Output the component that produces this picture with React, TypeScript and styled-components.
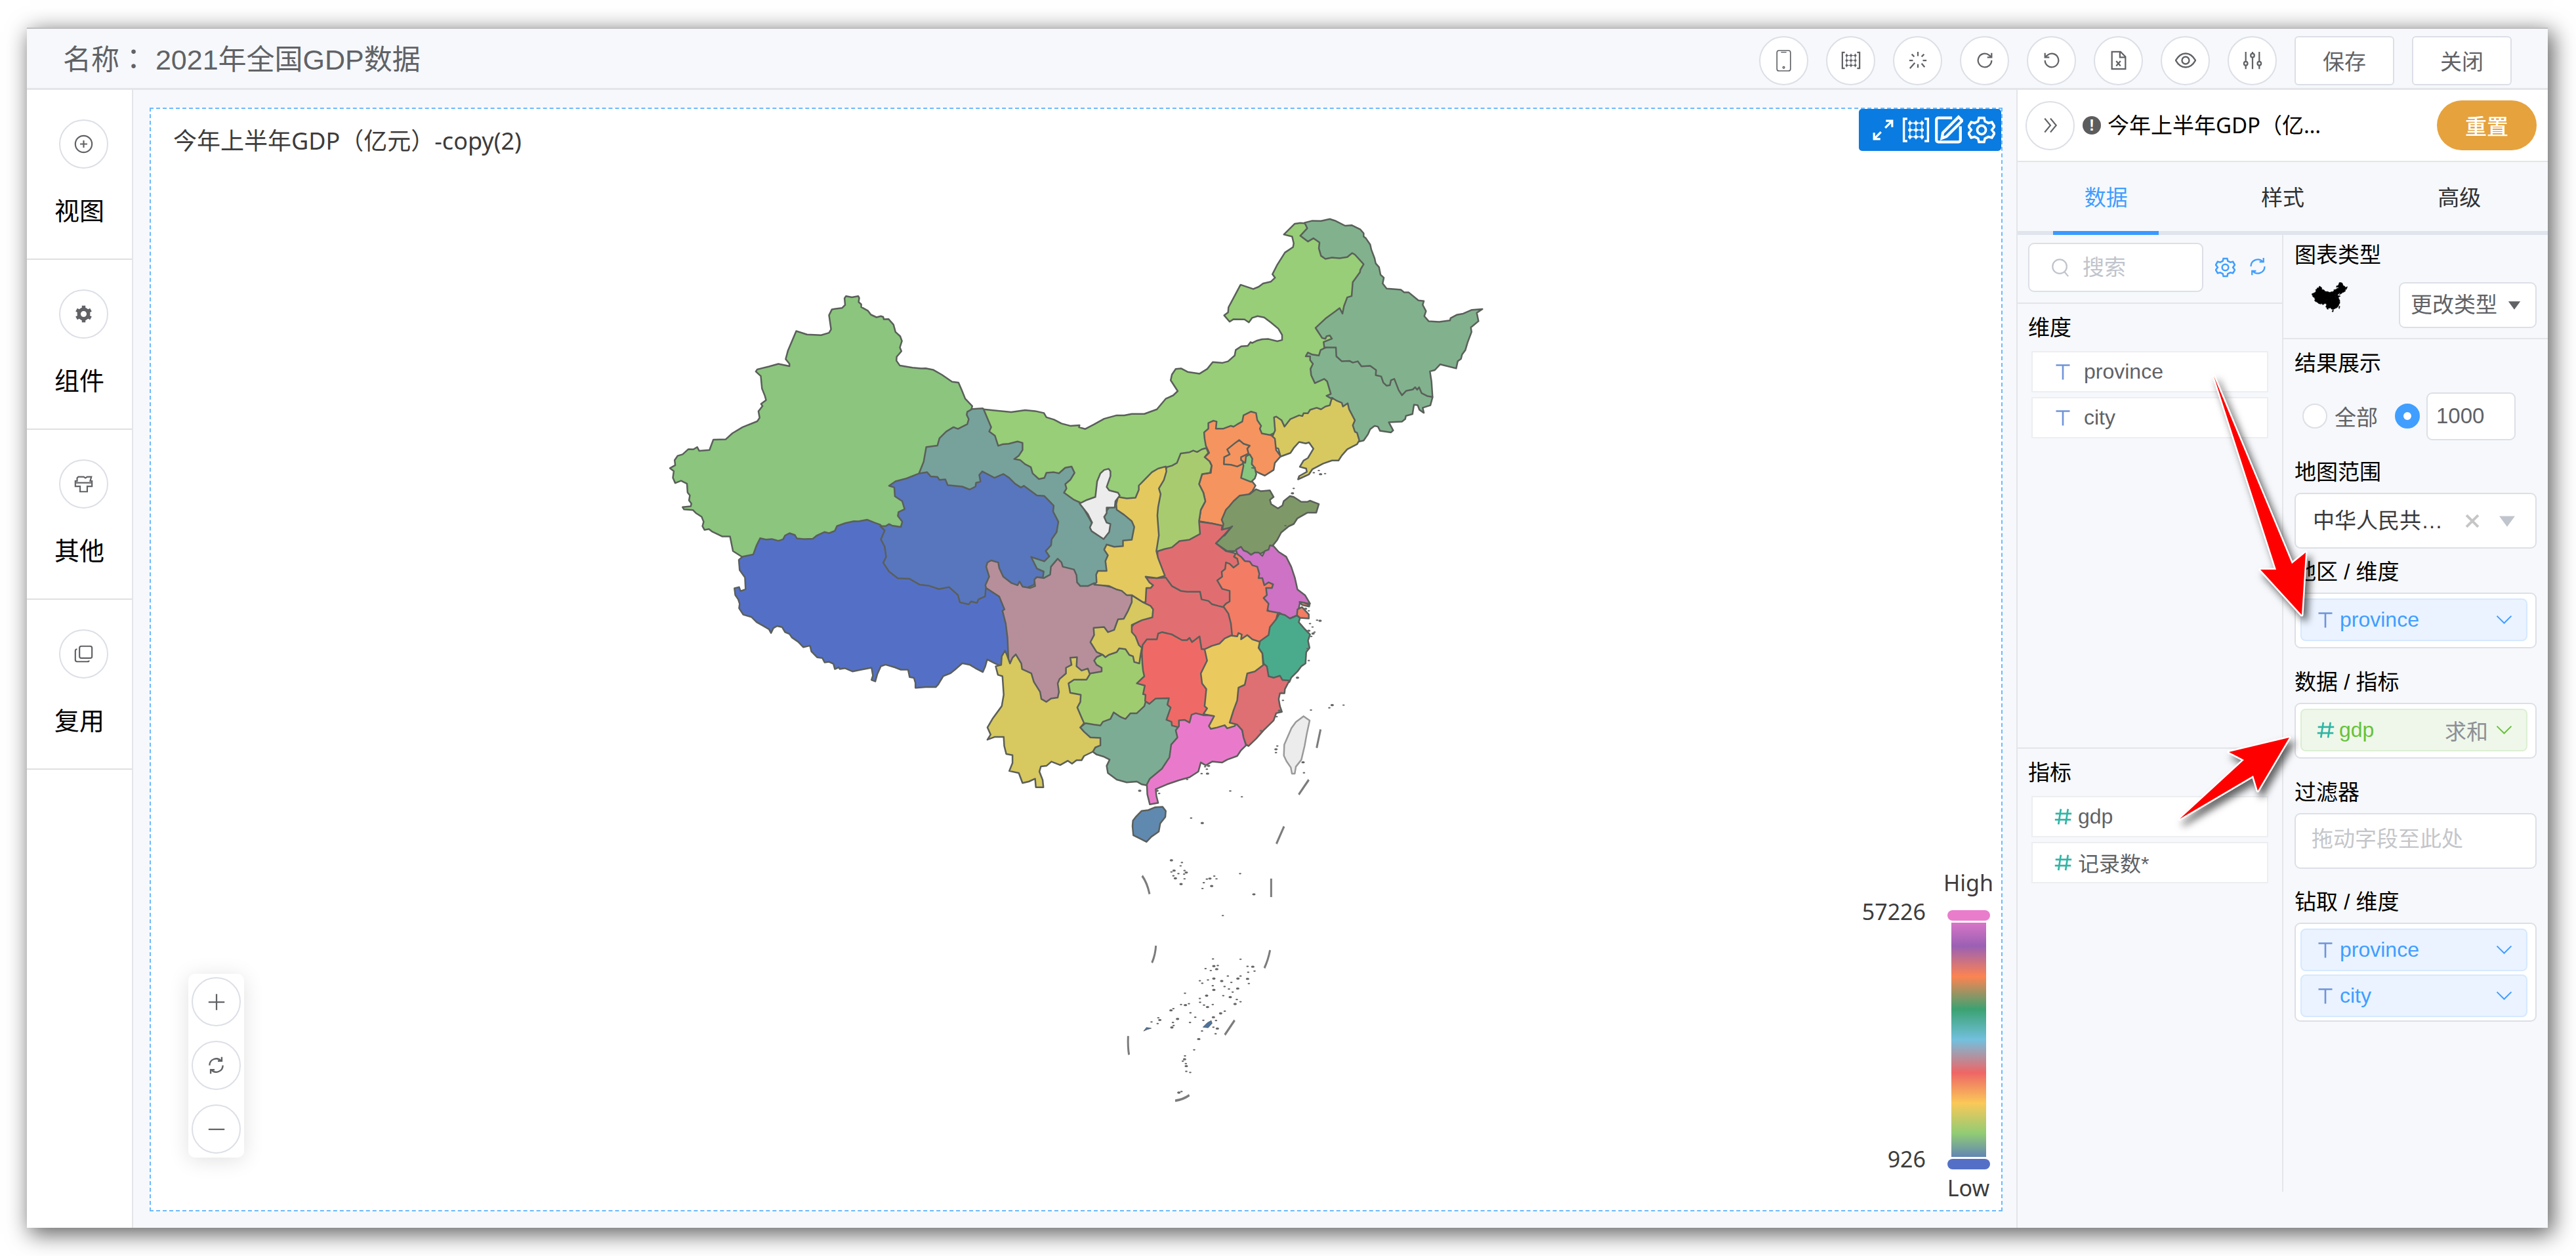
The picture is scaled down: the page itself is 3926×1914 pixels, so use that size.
import React from "react";
import styled, { createGlobalStyle, css } from "styled-components";

const sans = `"Liberation Sans", "Noto Sans CJK SC", sans-serif`;
const humanist = `"Noto Sans", "Noto Sans CJK SC", sans-serif`;

const c = {
  bg: "#f6f8fb",
  line: "#e4e5e8",
  control: "#dcdfe6",
  text: "#606266",
  muted: "#c0c4cc",
  blue: "#409eff",
  teal: "#31b5a5",
};

const GlobalStyle = createGlobalStyle`
  *, *::before, *::after { box-sizing: border-box; }
  body { margin: 0; background: #fff; font-family: ${sans}; color: #000; }
  button, input, select { font-family: inherit; margin: 0; }
  h1, h2, h3, ul { margin: 0; padding: 0; font-weight: 400; }
  ul { list-style: none; }
`;

/* ---------- map data ---------- */

type Tile = "nw" | "mid" | "ne" | "south";
const TILES: Record<Tile, [number, number, number, number]> = {
  nw: [980, 400, 700 / 1568, 700 / 1568],
  mid: [1480, 560, 600 / 1568, 680 / 1568],
  ne: [1800, 300, 1 / 3, 600 / 1568],
  south: [1640, 1040, 1 / 3, 660 / 1568],
};

type Region = { name: string; fill: string; faint?: boolean; parts: [Tile, string][] };

const REGIONS: Region[] = [
  { name: "新疆", fill: "#8bc57e", parts: [["nw", "693,115 713,119 735,115 738,121 736,135 745,143 745,152 768,165 778,178 797,187 812,183 820,186 822,194 838,193 855,212 862,237 878,252 884,268 877,290 882,303 866,322 865,335 877,352 920,359 950,362 965,361 990,366 1020,383 1055,407 1077,410 1088,435 1100,465 1124,490 1120,505 1140,560 1050,650 980,700 960,760 920,850 910,930 800,960 700,960 600,990 400,1010 345,1010 335,1003 307,985 297,935 270,935 235,918 225,910 210,913 203,900 207,885 200,868 180,855 170,845 140,843 135,835 163,832 165,823 157,812 160,795 152,785 150,755 130,745 110,753 102,735 105,712 92,702 110,692 108,675 118,660 135,655 155,637 172,638 185,630 192,643 227,640 240,605 282,604 305,583 340,562 390,542 398,530 394,508 408,490 403,483 420,470 416,455 406,430 402,388 385,372 390,365 430,355 462,346 500,354 500,346 487,330 495,300 523,234 560,246 608,248 635,240 642,228 635,180 645,160 680,155 690,145 688,122"]] },
  { name: "西藏", fill: "#5470c6", parts: [["nw", "340,1004 376,997 388,965 400,941 420,946 440,944 462,950 478,945 485,932 500,924 518,930 525,942 550,944 580,943 592,933 620,920 635,924 655,916 662,900 690,890 720,883 735,884 765,878 790,888 810,895 860,950 900,1050 1040,1080 1110,1130 1170,1090 1200,1120 1250,1180 1280,1330 1240,1380 1222,1378 1200,1368 1175,1355 1168,1380 1160,1398 1135,1385 1115,1373 1090,1368 1065,1390 1050,1402 1025,1412 1008,1440 1000,1449 965,1449 930,1452 930,1435 925,1418 910,1415 905,1390 880,1390 860,1382 828,1373 812,1378 800,1405 793,1430 780,1425 785,1410 780,1383 745,1390 715,1396 690,1385 672,1388 668,1382 655,1388 650,1370 635,1363 620,1365 612,1350 595,1348 575,1328 570,1308 547,1313 530,1295 508,1280 500,1268 485,1262 475,1245 458,1241 445,1248 437,1265 430,1252 410,1240 388,1228 370,1210 342,1202 328,1180 330,1165 325,1150 315,1135 312,1112 328,1108 333,1122 350,1115 348,1075 330,1050 327,1015"]] },
  { name: "内蒙古", fill: "#97ce77", parts: [
    ["mid", "50,147 160,157 215,150 255,153 290,160 300,175 330,183 360,197 395,205 432,203 430,210 455,216 490,200 530,180 580,168 610,168 640,163 690,163 740,147 775,110 805,98 823,83 795,45 800,25 815,5"],
    ["ne", "0,683 30,697 85,704 120,685 145,658 190,661 215,655 245,632 250,610 275,595 305,593 318,578 325,582 345,573 370,567 400,566 440,575 462,570 462,550 445,525 410,500 380,480 350,475 325,482 310,500 290,488 240,487 222,497 197,472 215,460 217,440 272,350 330,367 355,358 375,345 410,338 430,322 418,308 440,270 475,222 512,200 515,185 508,158 470,150 520,107 545,104 565,105 600,130 700,200 820,230 850,280 800,420 720,520 700,600 650,620 710,700 720,800 700,850 640,870 500,930 450,930 380,960 300,900 150,950 130,1020 60,1030"],
    ["mid", "880,330 790,370 760,380 700,440 670,500 600,480 560,470 490,470 430,490 380,480 340,430 370,380 310,400 230,390 150,330 170,290 90,300 40,220 30,160"]] },
  { name: "吉林", fill: "#82b38e", parts: [["ne", "570,635 580,620 600,628 630,632 638,610 655,603 720,580 800,630 900,680 980,700 1000,760 1100,740 1150,798 1140,830 1105,840 1110,860 1090,848 1082,830 1065,828 1058,865 1028,872 1025,885 1010,895 950,898 970,930 960,938 910,932 900,915 885,912 865,925 855,945 835,970 812,975 790,930 750,850 700,810 665,792 685,785 668,735 655,725 612,742 595,710 592,685 603,665 590,650 590,635"]] },
  { name: "黑龙江", fill: "#81b28d", parts: [["ne", "565,103 600,95 640,96 680,88 705,95 750,115 780,113 820,130 835,145 835,158 845,165 865,190 870,210 885,245 890,265 905,280 912,310 927,322 922,345 940,365 980,368 1005,370 1020,380 1040,380 1085,412 1110,415 1105,430 1120,455 1112,475 1132,495 1180,498 1230,492 1232,483 1260,470 1290,465 1330,450 1378,447 1352,462 1360,495 1325,520 1328,538 1310,580 1300,610 1285,628 1280,645 1265,655 1258,683 1185,667 1160,690 1138,695 1145,735 1150,797 1125,793 1100,782 1088,758 1080,768 1070,758 1060,767 1030,772 1010,790 995,770 975,725 960,730 955,750 940,752 925,740 915,715 890,710 892,690 865,673 825,675 808,655 785,660 770,653 735,655 710,635 708,600 655,600 652,578 690,565 680,552 665,555 660,565 645,562 615,522 660,485 725,443 738,465 745,435 760,400 780,395 785,340 818,300 820,290 835,268 795,230 782,224 760,240 725,244 690,242 660,247 640,235 630,205 633,182 605,165 580,178 545,155 577,125"]] },
  { name: "辽宁", fill: "#d7c960", parts: [["ne", "403,980 420,950 430,930 425,878 435,875 460,890 473,915 500,885 540,870 555,873 560,862 580,862 590,848 620,840 640,846 660,835 680,830 690,800 712,812 735,820 740,835 762,822 768,845 795,890 785,910 795,935 805,940 815,970 805,985 760,1005 735,1030 720,1050 690,1050 650,1062 600,1085 585,1105 535,1125 540,1112 575,1095 572,1082 543,1075 560,1050 580,1040 605,1003 585,978 570,982 540,976 515,1000 500,1020 455,1034 445,1003 415,995"]] },
  { name: "河北", fill: "#f5945e", parts: [["mid", "928,228 945,215 945,195 965,187 978,190 975,215 1005,215 1035,205 1045,208 1060,200 1080,190 1085,168 1115,155 1135,160 1140,185 1155,205 1150,215 1158,232 1195,238 1210,250 1215,290 1233,312 1210,335 1205,360 1170,380 1145,370 1135,365 1110,390 1133,415 1120,435 1060,480 1030,520 1010,560 997,555 960,548 908,540 915,500 933,470 925,440 908,410 920,375 955,370 958,345 950,330 930,315 948,300 935,275 930,250"]] },
  { name: "山东", fill: "#7f9868", parts: [["mid", "998,535 1015,500 1028,488 1045,470 1070,450 1110,445 1135,428 1155,435 1190,432 1205,455 1190,465 1195,480 1222,495 1240,485 1245,470 1270,452 1285,455 1315,472 1340,472 1350,468 1385,480 1375,510 1340,510 1300,530 1285,550 1265,558 1235,580 1220,605 1205,622 1185,640 1150,655 1115,658 1080,640 1055,645 1020,645 975,618 985,600 1010,590 1040,558 1015,572 1000,570 1005,550"]] },
  { name: "江苏", fill: "#cd72c5", parts: [["mid", "1055,640 1075,630 1085,643 1100,648 1115,658 1130,650 1145,650 1160,662 1170,645 1185,640 1190,625 1205,628 1225,648 1255,665 1275,700 1290,740 1300,780 1330,800 1350,830 1310,825 1300,870 1270,882 1228,862 1200,870 1150,820 1130,720 1080,680 1060,655"]] },
  { name: "河南", fill: "#e06e70", parts: [["mid", "745,600 880,560 908,542 960,548 1000,556 998,570 1035,562 1012,585 975,618 1015,645 1050,652 1100,700 1050,760 1060,840 1010,880 900,830 800,800 760,760 740,700"]] },
  { name: "湖北", fill: "#e16e71", parts: [["mid", "700,738 740,740 775,738 800,768 835,785 860,788 912,788 918,815 945,820 960,832 985,838 1005,842 1040,850 1060,940 1030,980 940,1010 900,980 700,1010 665,1000 620,930 680,870 680,750"]] },
  { name: "山西", fill: "#a9cb6f", parts: [["mid", "780,350 800,345 820,335 835,302 870,298 885,292 900,297 920,287 937,283 945,300 930,315 950,330 958,345 952,370 920,375 908,410 925,440 933,470 915,500 908,540 912,585 870,605 830,610 800,632 770,638 735,648 720,600 720,500 730,430"]] },
  { name: "甘肃", fill: "#76a29b", parts: [
    ["nw", "1107,510 1124,500 1160,498"],
    ["mid", "50,147 80,210 72,225 95,240 108,275 125,270 150,268 185,260 205,265 205,290 190,310 172,322 195,325 215,340 238,350 245,372 270,392 292,388 300,370 330,368 350,372 375,352 400,348 412,370 395,395 375,410 380,425 370,440 410,465 435,475 490,560 560,480 600,480 670,540 670,620 570,640 560,700 520,740 500,790 430,800 380,730 345,700 300,760"],
    ["nw", "1350,1080 1320,1060 1280,980 1350,900 1300,800 1200,760 1110,800 1000,760 960,740 943,718 958,680 967,630 1005,625 1012,600 1035,577 1060,562 1075,568 1107,552 1112,535 1105,520"]] },
  { name: "青海", fill: "#5876be", parts: [["nw", "810,900 828,900 840,893 850,898 880,903 885,885 870,865 872,852 893,842 885,815 860,798 858,768 840,762 862,747 900,737 943,720 970,716 982,730 1005,732 1012,742 1032,740 1040,760 1090,765 1115,775 1135,765 1137,752 1152,748 1148,725 1158,713 1200,735 1230,722 1250,735 1270,755 1290,768 1300,762 1345,795 1370,797 1402,830 1400,850 1418,885 1412,920 1395,945 1393,965 1375,985 1387,1003 1370,1020 1325,1005 1345,1045 1368,1055 1365,1075 1342,1075 1335,1100 1312,1110 1290,1130 1220,1090 1190,1050 1170,1115 1168,1140 1145,1150 1140,1162 1120,1157 1112,1167 1082,1160 1075,1135 1045,1108 1010,1115 975,1103 945,1100 910,1080 870,1078 840,1055 820,1025 830,1005 825,970 812,945 825,915"]] },
  { name: "四川", fill: "#b68f9b", parts: [["mid", "60,700 65,685 80,678 108,685 112,705 128,735 160,757 185,765 193,752 205,770 235,775 255,768 252,745 262,737 290,740 315,728 318,700 345,672 360,685 365,700 410,710 420,730 422,755 435,768 465,768 490,758 600,780 650,790 660,850 600,920 530,960 510,990 550,1050 500,1100 400,1100 370,1180 300,1200 250,1150 180,1080 150,1050 148,1010 145,950 138,900 125,855 133,850 112,805 60,775 57,765 72,735"]] },
  { name: "云南", fill: "#d7c85f", parts: [["mid", "135,995 142,1008 155,1040 165,1020 178,1008 200,1040 203,1060 240,1075 250,1105 275,1140 280,1165 300,1175 318,1163 345,1160 350,1140 345,1110 352,1095 378,1075 378,1055 400,1045 395,1020 422,1018 420,1050 440,1065 465,1058 472,1075 500,1110 450,1130 470,1200 470,1260 530,1280 540,1320 500,1360 485,1350 450,1365 440,1380 420,1380 402,1392 385,1382 355,1397 320,1385 300,1400 278,1402 272,1420 285,1450 288,1475 258,1475 255,1445 230,1455 205,1460 190,1425 152,1418 165,1390 165,1362 140,1358 132,1330 130,1298 95,1298 65,1308 78,1290 65,1265 85,1235 122,1190 130,1150 125,1085 107,1080 98,1050 120,1045 122,1015"]] },
  { name: "贵州", fill: "#a0cc70", parts: [["mid", "490,1030 500,1018 520,1010 600,960 660,1000 720,1050 720,1180 700,1210 640,1250 560,1270 470,1280 435,1265 450,1250 440,1230 423,1195 435,1175 437,1150 395,1143 388,1110 410,1097 460,1097 475,1075 520,1068 520,1055 500,1045"]] },
  { name: "重庆", fill: "#d7c85f", parts: [["mid", "640,800 685,825 715,838 725,850 722,878 680,888 640,905 640,930 655,945 668,975 680,985 675,1010 670,1040 650,1035 645,1015 630,1010 615,990 590,987 580,1000 548,1010 535,1018 525,1010 500,1000 475,965 490,940 488,915 530,912 545,930 570,922 585,885 608,883 625,855 640,825"]] },
  { name: "陕西", fill: "#e4c95f", parts: [["mid", "775,348 778,365 768,395 748,425 755,445 745,490 742,520 748,590 738,645 745,670 758,700 772,732 740,740 695,735 710,755 725,765 715,775 698,775 695,825 685,825 640,800 620,800 600,785 580,780 550,768 490,763 500,755 498,728 505,715 540,715 535,680 545,660 530,640 540,622 570,630 605,628 605,608 640,605 650,560 640,540 610,518 580,500 578,480 585,455 620,460 655,458 668,430 668,415 690,395 720,368 745,355"]] },
  { name: "宁夏", fill: "#ececec", parts: [["mid", "530,360 548,356 555,365 555,382 540,420 550,432 585,440 592,450 575,470 572,492 540,492 540,512 530,525 540,545 555,550 550,578 528,603 480,575 473,562 482,545 465,515 432,478 462,465 495,455 502,400 515,372"]] },
  { name: "广西", fill: "#7dac94", parts: [["mid", "435,1265 455,1250 490,1255 515,1258 525,1245 555,1235 568,1212 590,1225 600,1230 615,1235 635,1215 660,1215 690,1190 700,1160 800,1150 830,1230 850,1260 830,1320 800,1400 740,1450 710,1470 680,1465 660,1455 620,1458 580,1448 545,1425 540,1400 552,1378 530,1368 500,1360 485,1350 495,1335 515,1328 515,1302 475,1300 450,1280"]] },
  { name: "湖南", fill: "#ef6a66", parts: [["mid", "683,975 700,955 740,955 745,935 760,930 800,938 840,958 860,958 870,950 880,965 910,945 918,990 930,990 960,1000 960,1200 925,1260 850,1270 800,1258 798,1245 778,1238 795,1195 782,1185 788,1162 735,1163 710,1182 693,1172 695,1150 685,1148 692,1118 660,1110 690,1085 685,1065 682,1040 680,1000"]] },
  { name: "广东", fill: "#e97acb", parts: [["mid", "828,1240 850,1238 870,1248 878,1220 895,1215 925,1222 965,1222 990,1245 1050,1245 1078,1270 1095,1328 1075,1345 1060,1365 1020,1378 1000,1388 960,1385 935,1398 915,1388 905,1420 870,1440 830,1450 780,1465 735,1482 738,1505 745,1530 712,1535 702,1500 700,1465 712,1445 760,1410 790,1370 797,1325 822,1300 815,1275 828,1260"]] },
  { name: "安徽", fill: "#f27c64", parts: [["mid", "1055,652 1075,665 1090,680 1110,682 1120,695 1140,700 1148,725 1145,740 1160,740 1168,765 1185,755 1203,762 1198,775 1175,775 1178,800 1165,810 1185,830 1180,855 1222,862 1215,885 1200,910 1190,950 1150,970 1110,965 1060,960 1040,945 1035,900 1025,865 1005,840 1015,830 1030,822 1030,785 1000,778 980,748 1000,735 998,718 1012,708 1015,685 1030,690 1045,703 1065,690 1060,672 1047,665"]] },
  { name: "浙江", fill: "#4aab8c", parts: [["mid", "1150,962 1185,940 1190,912 1215,885 1228,865 1250,870 1270,882 1298,872 1310,880 1305,895 1330,920 1350,938 1342,960 1348,985 1335,1000 1332,1040 1315,1050 1300,1068 1275,1090 1268,1105 1240,1110 1200,1110 1180,1080 1165,1040 1160,1005 1145,985"]] },
  { name: "江西", fill: "#eac95e", parts: [["mid", "930,990 960,978 990,970 1010,952 1035,942 1060,945 1065,933 1078,938 1075,955 1100,940 1120,955 1150,964 1145,985 1160,1005 1163,1042 1180,1060 1110,1120 1090,1200 1050,1260 1020,1268 1010,1257 980,1265 955,1270 947,1260 968,1225 925,1218 940,1198 930,1190 937,1130 920,1110 915,1075 940,1030"]] },
  { name: "福建", fill: "#de6f73", parts: [["mid", "1168,1043 1178,1050 1185,1085 1205,1090 1230,1083 1240,1098 1268,1100 1250,1130 1248,1145 1230,1145 1225,1165 1230,1190 1238,1210 1215,1215 1205,1240 1165,1275 1135,1305 1105,1330 1095,1325 1085,1300 1080,1275 1060,1255 1030,1248 1045,1205 1060,1170 1065,1125 1090,1115 1100,1075 1130,1068"]] },
  { name: "上海", fill: "#f27c64", parts: [["mid", "1300,850 1318,842 1345,868 1345,882 1310,880 1298,870"]] },
  { name: "崇明", fill: "#f27c64", parts: [["mid", "1308,824 1325,826 1348,835 1346,840 1318,834"]] },
  { name: "北京", fill: "#f5945e", parts: [["mid", "1007,340 1008,315 1030,305 1020,288 1052,265 1068,255 1085,268 1110,275 1100,285 1105,302 1075,315 1075,325 1090,335 1060,348 1035,342"]] },
  { name: "天津", fill: "#86c67f", parts: [["mid", "1095,312 1110,305 1120,320 1118,340 1130,352 1136,375 1130,390 1115,402 1075,388 1085,345 1082,335 1092,335"]] },
  { name: "海南", fill: "#6089b0", parts: [["south", "260,500 275,485 300,465 330,462 360,452 395,450 410,465 408,487 385,510 378,540 345,558 322,577 300,568 262,553 258,520"]] },
  { name: "台湾", fill: "#ececec", faint: true, parts: [["south", "1040,122 1068,138 1055,185 1045,230 1030,280 1005,305 1000,330 987,330 982,308 962,285 950,265 952,225 985,165 1005,143"]] },
];

const toPoints = (parts: [Tile, string][]) =>
  parts
    .map(([tile, pts]) => {
      const [ox, oy, sx, sy] = TILES[tile];
      return pts
        .split(" ")
        .map((p) => {
          const [x, y] = p.split(",").map(Number);
          return `${(ox + x * sx).toFixed(1)},${(oy + y * sy).toFixed(1)}`;
        })
        .join(" ");
    })
    .join(" ");

const SEA_LINES = [
  "M1118,170L1100,237", "M1064,352L1018,406", "M951,521L916,584", "M892,710V777",
  "M302,700Q325,725 336,766", "M365,953Q363,985 347,1015", "M887,969Q878,1005 861,1034",
  "M725,1223L680,1276", "M238,1280Q236,1320 242,1348", "M518,1494Q490,1510 453,1514",
];

const ISLANDS =
  "436,644 484,652 478,664 448,681 436,686 445,700 454,709 468,692 496,681 504,688 494,694 496,711 480,730 " +
  "584,725 598,712 612,710 632,701 642,711 620,737 578,746 750,692 813,767 671,844 526,491 577,509 705,393 758,414 " +
  "291,392 626,1001 752,1002 630,1027 648,1025 616,1043 643,1038 592,1036 784,1028 808,1029 787,1049 816,1045 740,1072 " +
  "752,1063 694,1063 784,1073 790,1090 603,1077 630,1072 566,1080 577,1089 666,1081 710,1086 625,1098 630,1113 679,1101 " +
  "699,1110 739,1108 716,1121 498,1125 597,1134 566,1144 673,1134 705,1139 735,1148 752,1156 727,1164 567,1158 585,1168 " +
  "601,1175 625,1166 480,1166 500,1168 516,1163 445,1181 434,1187 523,1196 545,1212 661,1198 680,1190 376,1214 383,1222 " +
  "345,1229 373,1235 464,1218 443,1231 446,1242 438,1249 521,1231 582,1223 628,1212 640,1224 628,1248 646,1253 638,1272 " +
  "576,1262 561,1291 540,1330 498,1352 496,1364 488,1371 502,1380 504,1389 504,1408 522,1412 470,1485 482,1481 " +
  "1158,92 1171,82 1223,82 1074,100 1038,289 1042,327 920,230 914,242 914,254 590,305 606,302 598,314 574,330 601,330 " +
  "508,351 380,402 370,392 940,37 946,65 930,102 917,124 845,175";

const EAST_ISLETS =
  "1332,848 1345,855 1378,888 1390,890 1350,900 1360,912 1345,925 1368,930 1355,945 1362,935 1340,988 1345,1030 1300,1090 " +
  "1365,370 1385,362 1392,375 1410,373 1285,425 1280,442 1252,556 1120,353 1128,353";

const Dots = ({ tile, pts }: { tile: Tile; pts: string }) => {
  const [ox, oy, sx, sy] = TILES[tile];
  return (
    <g fill="#666">
      {pts.split(" ").map((p, i) => {
        const [x, y] = p.split(",").map(Number);
        return <ellipse key={p} cx={ox + x * sx} cy={oy + y * sy} rx={i % 3 === 0 ? 2.6 : 1.9} ry={i % 3 === 0 ? 1.7 : 1.1} />;
      })}
    </g>
  );
};

const ChinaMap = () => {
  const [ox, oy, sx, sy] = TILES.south;
  return (
    <MapSvg viewBox="230 166 2820 1678" role="img" aria-label="今年上半年GDP（亿元）">
      <g strokeLinejoin="round" strokeWidth="2.5">
        {REGIONS.map((r) => (
          <polygon key={r.name} points={toPoints(r.parts)} fill={r.fill} stroke={r.faint ? "#9a9a9a" : "#5a5f5a"} />
        ))}
      </g>
      <g transform={`translate(${ox} ${oy}) scale(${sx} ${sy})`}>
        <g fill="none" stroke="#7c7c7c" strokeWidth="9">
          {SEA_LINES.map((d) => <path key={d} d={d} />)}
        </g>
        <path d="M580,1248L600,1232L618,1224L622,1234L604,1250Z M309,1262L322,1249L344,1252L326,1256Z" fill="#4f739c" stroke="#555" strokeWidth="2" />
      </g>
      <Dots tile="south" pts={ISLANDS} />
      <Dots tile="mid" pts={EAST_ISLETS} />
    </MapSvg>
  );
};

const MiniMap = () => (
  <svg width="55" height="46" viewBox="1015 325 1250 970" preserveAspectRatio="none" aria-hidden="true">
    {REGIONS.map((r) => (
      <polygon key={r.name} points={toPoints(r.parts)} fill="#000" stroke="#000" strokeWidth="12" />
    ))}
  </svg>
);

/* ---------- icons ---------- */

const PATHS: Record<string, React.ReactNode> = {
  phone: <><rect x="6" y="1" width="20" height="30" rx="3" strokeWidth="1.6" /><path d="M12 3.5h8" strokeWidth="1.4" /><circle cx="16" cy="26" r="1.3" strokeWidth="1.4" /></>,
  grid: <><path d="M6 3H2v26h4M26 3h4v26h-4" /><path d="M9 8h14M9 16h14M9 24h14M9 5v22M16 5v22M23 5v22" strokeWidth="1" /><path d="M9 8h.1M16 8h.1M23 8h.1M9 16h.1M16 16h.1M23 16h.1M9 24h.1M16 24h.1M23 24h.1" strokeWidth="4" strokeLinecap="round" /></>,
  burst: <path d="M16 2v7M16 22v6M2 16h6M24 16h6M6 6l4 4M26 6l-4 4M11 20l-8 9M22 21l5 6" />,
  redo: <><path d="M27 16a11 11 0 1 1-4-8.500l3 2.500" /><path d="M27 4v7h-7" /></>,
  undo: <><path d="M5 16a11 11 0 1 0 4-8.500l-3 2.500" /><path d="M5 4v7h7" /></>,
  file: <><path d="M5 2h14l8 8v20H5z" /><path d="M18 2v9h9M12 17l7 8M19 17l-7 8" /></>,
  eye: <><path d="M1 16C5 9 10 5.500 16 5.500S27 9 31 16c-4 7-9 10.500-15 10.500S5 23 1 16z" /><circle cx="16" cy="16" r="5.500" /></>,
  sliders: <><path d="M5 2v16M5 24v6M16 2v3M16 11v19M27 2v16M27 24v6" /><circle cx="5" cy="21" r="3" /><circle cx="16" cy="8" r="3" /><circle cx="27" cy="21" r="3" /></>,
  plusCircle: <><circle cx="16" cy="16" r="14" /><path d="M16 10v12M10 16h12" /></>,
  gearBold: <><circle cx="16" cy="16" r="8" strokeWidth="6" /><path d="M16 2v5M16 25v5M3.900 9l4.300 2.500M23.800 20.500l4.300 2.500M3.900 23l4.300-2.500M23.800 11.500L28.100 9" strokeWidth="6" /></>,
  brush: <><path d="M7 4h9l3 2 3-2h7l-2 7h3v9h-8v9H10v-9H2v-9h3V6z" /><path d="M3 14h26" /></>,
  copy: <><rect x="9" y="3" width="21" height="20" rx="3" /><path d="M5 8c-2 0-3 1-3 3v15c0 2 1 3 3 3h17c2 0 3-1 3-2" /></>,
  plus: <path d="M16 3v26M3 16h26" />,
  minus: <path d="M3 16h26" />,
  sync: <><path d="M28 16a12 12 0 0 1-21 8M4 16A12 12 0 0 1 25 8" /><path d="M6 31v-7h7M26 1v7h-7" /></>,
  forward: <path d="M6 4l10 12L6 28M16 4l10 12-10 12" />,
  search: <><circle cx="15" cy="14" r="11.500" /><path d="M23 23l6 7" /></>,
  cog: <><path d="M13 2h6l1 4 4 2 4-1 3 5-3 4 3 4-3 5-4-1-4 2-1 4h-6l-1-4-4-2-4 1-3-5 3-4-3-4 3-5 4 1 4-2z" /><circle cx="16" cy="16" r="5" /></>,
  expand: <><path d="M19 13L29 3M20 3h9v9M13 19L3 29M12 29H3v-9" /></>,
  edit: <><path d="M20 3H5a2 2 0 0 0-2 2v22a2 2 0 0 0 2 2h22a2 2 0 0 0 2-2V12" /><path d="M27 2l4 4-17 17-5 2 1-6z" /></>,
  typeT: <path d="M4 4h24M16 4v25" />,
  hash: <path d="M12 3L8 29M24 3l-4 26M3 11h27M2 21h27" />,
  down: <path d="M3 9l13 13L29 9" />,
  cross: <path d="M5 5l22 22M27 5L5 27" />,
};

const Icon = ({ name, size = 30, weight = 2.4 }: { name: string; size?: number; weight?: number }) => (
  <svg width={size} height={size} viewBox="0 0 32 32" fill="none" stroke="currentColor" strokeWidth={weight} aria-hidden="true">
    {PATHS[name]}
  </svg>
);

const Caret = ({ size }: { size: number }) => (
  <svg width={size} height={size} viewBox="0 0 24 24" fill="currentColor" aria-hidden="true"><path d="M1 5h22L12 20z" /></svg>
);

/* ---------- shell ---------- */

const Page = styled.div`
  min-height: 100vh;
  padding: 42px 43px 43px 41px;
  display: flex;
`;

const Window = styled.div`
  flex: 1;
  display: flex;
  flex-direction: column;
  background: ${c.bg};
  border-top: 2px solid #bfbfc0;
  box-shadow: 6px 8px 32px 2px rgba(0, 0, 0, 0.62);
`;

const Header = styled.header`
  height: 93px;
  padding: 0 55px;
  display: flex;
  justify-content: space-between;
  align-items: center;
  border-bottom: 3px solid ${c.line};
`;

const PageTitle = styled.h1`
  font-size: 43px;
  line-height: 60px;
  color: ${c.text};
`;

const Colon = styled.span`
  font-family: "Noto Sans CJK TC", sans-serif;
`;

const Actions = styled.div`
  display: flex;
  gap: 27px;
  padding-top: 6px;
`;

const Round = styled.button`
  width: 75px;
  height: 75px;
  padding: 0;
  display: flex;
  align-items: center;
  justify-content: center;
  flex: none;
  border: 2px solid ${c.control};
  border-radius: 50%;
  background: #fff;
  color: ${c.text};
`;

const PlainButton = styled.button`
  width: 152px;
  height: 75px;
  border: 2px solid ${c.control};
  border-radius: 6px;
  background: #fff;
  color: ${c.text};
  font-size: 33px;
`;

const Main = styled.div`
  flex: 1;
  display: flex;
`;

const Sidebar = styled.nav`
  width: 162px;
  background: #fff;
  border-right: 2px solid ${c.line};
`;

const SideItem = styled.div`
  height: 259px;
  padding-top: 45px;
  display: flex;
  flex-direction: column;
  align-items: center;
  gap: 38px;
  border-bottom: 2px solid #dfe0e2;
`;

const SideRound = styled(Round)`
  margin-left: 13px;
`;

const SideLabel = styled.span`
  font-size: 38px;
  line-height: 54px;
`;

/* ---------- canvas ---------- */

const Stage = styled.main`
  flex: 1;
  min-width: 0;
  display: flex;
  padding: 27px 21px 25px 25px;
`;

const Canvas = styled.section`
  flex: 1;
  min-width: 0;
  display: grid;
  border: 2px dashed #6cbaff;
  background: #fff;
  font-family: ${humanist};
  color: #3c3c3c;
  & > * { grid-area: 1 / 1; }
`;

const MapSvg = styled.svg`
  width: 100%;
  height: 100%;
  min-height: 0;
`;

const ChartTitle = styled.h2`
  place-self: start;
  padding: 24px 34px;
  font-size: 36px;
  line-height: 50px;
`;

const ChartTools = styled.div`
  place-self: start end;
  height: 64px;
  padding: 0 8px 0 14px;
  display: flex;
  align-items: center;
  gap: 5px;
  border-radius: 5px;
  background: #0a7be0;
`;

const Tool = styled.button`
  width: 45px;
  height: 45px;
  padding: 0;
  display: flex;
  align-items: center;
  justify-content: center;
  border: 0;
  background: none;
  color: #fff;
`;

const ZoomCard = styled.div`
  place-self: end start;
  margin: 0 0 80px 57px;
  padding: 5px 5px 6px;
  display: flex;
  flex-direction: column;
  gap: 22px;
  border-radius: 10px;
  background: #fff;
  box-shadow: 0 4px 32px rgba(0, 0, 0, 0.12);
`;

const Legend = styled.div`
  place-self: end;
  margin: 0 14px 14px 0;
  display: grid;
  grid-template-columns: auto 72px;
  column-gap: 29px;
  justify-items: center;
  font-size: 34px;
  line-height: 48px;
`;

const LegendWord = styled.span`
  grid-column: 2;
  line-height: 40px;
`;

const LegendValues = styled.div`
  justify-self: end;
  height: 425px;
  display: flex;
  flex-direction: column;
  justify-content: space-between;
  text-align: right;
`;

const LegendScale = styled.div`
  padding: 22px 0 8px;
  display: flex;
  flex-direction: column;
  align-items: center;
  gap: 3px;
`;

const Handle = styled.span<{ $color: string }>`
  width: 65px;
  height: 16px;
  border-radius: 8px;
  background: ${(p) => p.$color};
`;

const Ramp = styled.span`
  flex: 1;
  width: 53px;
  background: linear-gradient(#ea7ccc -3%, #9a60b4 10%, #fc8452 23%, #3ba272 37%, #73c0de 50%, #ee6666 64%, #fac858 77%, #91cc75 90%, #5470c6 103%);
`;

/* ---------- right panel ---------- */

const Panel = styled.aside`
  position: relative;
  width: 810px;
  flex: none;
  display: flex;
  flex-direction: column;
  border-left: 2px solid ${c.line};
  font-size: 33px;
`;

const PanelHead = styled.div`
  height: 110px;
  padding: 0 17px 0 12px;
  display: flex;
  align-items: center;
  background: #fff;
  border-bottom: 2px solid ${c.line};
`;

const InfoDot = styled.span`
  width: 28px;
  height: 28px;
  margin: 0 10px 0 12px;
  border-radius: 50%;
  background: #5c5c5c;
  color: #fff;
  font-size: 24px;
  line-height: 28px;
  font-weight: 700;
  text-align: center;
`;

const PanelTitle = styled.h2`
  font-family: ${humanist};
  font-size: 33px;
  line-height: 48px;
  white-space: nowrap;
`;

const ResetButton = styled.button`
  width: 152px;
  height: 76px;
  margin-left: auto;
  border: 0;
  border-radius: 38px;
  background: #e6a23c;
  color: #fff;
  font-size: 33px;
  font-weight: 500;
`;

const Tabs = styled.div`
  height: 111px;
  display: flex;
  border-bottom: 6px solid #dfe4ed;
`;

const Tab = styled.button<{ $active?: boolean }>`
  flex: 1;
  padding: 0 54px;
  margin-bottom: -6px;
  display: flex;
  flex-direction: column;
  border: 0;
  background: none;
  font-size: 33px;
  line-height: 101px;
  color: ${(p) => (p.$active ? c.blue : "#303133")};
  & > span {
    width: 100%;
    padding-top: 4px;
    border-bottom: 6px solid ${(p) => (p.$active ? "#3a99ff" : "transparent")};
  }
`;

const Columns = styled.div`
  flex: 1;
  display: flex;
  padding-bottom: 55px;
`;

const Fields = styled.div`
  width: 405px;
  flex: none;
  display: flex;
  flex-direction: column;
  border-right: 2px solid ${c.line};
`;

const SearchRow = styled.div`
  padding: 12px 22px 16px 16px;
  display: flex;
  align-items: center;
  gap: 18px;
  border-bottom: 2px solid ${c.line};
`;

const SearchBox = styled.label`
  flex: 1;
  min-width: 0;
  height: 75px;
  padding: 0 14px 0 32px;
  display: flex;
  align-items: center;
  gap: 19px;
  border: 2px solid ${c.control};
  border-radius: 9px;
  background: #fff;
  color: ${c.muted};
  & > svg { flex: none; }
  & > input {
    width: 100%;
    min-width: 0;
    padding: 0;
    border: 0;
    outline: 0;
    background: none;
    font-size: 33px;
    color: ${c.text};
  }
  & > input::placeholder { color: ${c.muted}; }
`;

const LinkIcon = styled.button`
  width: 31px;
  height: 31px;
  padding: 0;
  border: 0;
  background: none;
  color: ${c.blue};
`;

const FieldGroup = styled.section`
  flex: 1;
  padding: 12px 21px 0 16px;
  & + & { border-top: 2px solid ${c.line}; }
`;

const Heading = styled.h3`
  font-size: 33px;
  line-height: 50px;
`;

const FieldList = styled.ul`
  padding: 10px 0 0 5px;
  display: flex;
  flex-direction: column;
  gap: 7px;
`;

const FieldRow = styled.li<{ $metric?: boolean }>`
  height: 63px;
  padding-left: 32px;
  display: flex;
  align-items: center;
  gap: ${(p) => (p.$metric ? 8 : 18)}px;
  border: 2px solid #eceef1;
  background: #fff;
  color: ${c.text};
  font-size: 32px;
  & > svg { color: ${(p) => (p.$metric ? c.teal : "#6f94d8")}; }
`;

const Settings = styled.div`
  flex: 1;
  min-width: 0;
`;

const Block = styled.section<{ $top: number }>`
  padding: ${(p) => p.$top}px 17px 0;
`;

const ChartTypeBlock = styled(Block)`
  padding-bottom: 15px;
  border-bottom: 2px solid ${c.line};
`;

const ChartTypeRow = styled.div`
  padding: 16px 0 0 26px;
  display: flex;
  justify-content: space-between;
  align-items: flex-start;
`;

const boxed = css`
  border: 2px solid ${c.control};
  border-radius: 9px;
  background: #fff;
`;

const SelectBox = styled.div<{ $scope?: boolean }>`
  ${boxed}
  height: ${(p) => (p.$scope ? 85 : 70)}px;
  width: ${(p) => (p.$scope ? "auto" : "210px")};
  margin-top: ${(p) => (p.$scope ? 6 : 0)}px;
  display: flex;
  align-items: center;
  justify-content: space-between;
  padding: ${(p) => (p.$scope ? "0 30px 0 26px" : "0 22px 0 16px")};
  color: ${(p) => (p.$scope ? c.muted : c.text)};
  & > select {
    width: ${(p) => (p.$scope ? 206 : 136)}px;
    padding: 0;
    appearance: none;
    border: 0;
    background: none;
    color: ${(p) => (p.$scope ? "#3a3a3a" : c.text)};
    font-size: 33px;
    line-height: 48px;
    text-overflow: ellipsis;
    white-space: nowrap;
    overflow: hidden;
  }
`;

const ClearButton = styled.button`
  margin-left: auto;
  margin-right: 27px;
  padding: 0;
  border: 0;
  display: flex;
  background: none;
  color: #c6c6c6;
`;

const LimitRow = styled.div`
  padding: 18px 0 0 12px;
  height: 92px;
  display: flex;
  align-items: center;
  color: ${c.text};
  & > label { margin: 0 26px 0 11px; }
`;

const Radio = styled.input`
  appearance: none;
  width: 38px;
  height: 38px;
  border: 2px solid ${c.control};
  border-radius: 50%;
  background: #fff;
  &:checked { border: 13px solid ${c.blue}; }
`;

const LimitInput = styled.input`
  ${boxed}
  width: 136px;
  height: 73px;
  margin-left: 10px;
  padding: 0 13px;
  font-size: 33px;
  color: ${c.text};
`;

const DropZone = styled.div`
  ${boxed}
  min-height: 85px;
  margin-top: 6px;
  padding: 7px 12px 5px 7px;
  display: flex;
  flex-direction: column;
  gap: 5px;
`;

const Placeholder = styled.span`
  padding-left: 17px;
  line-height: 62px;
  color: #c4c6ca;
`;

const Chip = styled.button<{ $metric?: boolean }>`
  height: 65px;
  padding: 0 20px 0 22px;
  display: flex;
  align-items: center;
  gap: ${(p) => (p.$metric ? 6 : 8)}px;
  border: 2px solid ${(p) => (p.$metric ? "#dcefd3" : "#d6e9ff")};
  border-radius: 8px;
  background: ${(p) => (p.$metric ? "#eff7ea" : "#eaf3ff")};
  color: ${(p) => (p.$metric ? "#67c23a" : c.blue)};
  font-size: 32px;
  & > svg:first-child { color: ${(p) => (p.$metric ? c.teal : "#6f94d8")}; }
  & > svg:last-child { margin-left: ${(p) => (p.$metric ? "5px" : "auto")}; }
`;

const Aggregate = styled.span`
  margin-left: auto;
  color: #8c9097;
  font-size: 33px;
`;

const Arrows = styled.svg`
  position: absolute;
  top: 0;
  left: -2px;
  width: 810px;
  height: 1734px;
  pointer-events: none;
  filter: drop-shadow(6px 8px 6px rgba(0, 0, 0, 0.6));
`;

const DimChip = ({ children }: { children: string }) => (
  <Chip type="button">
    <Icon name="typeT" size={28} weight={3} />
    {children}
    <Icon name="down" size={27} weight={2.4} />
  </Chip>
);

const TOOLBAR: [string, string, number][] = [
  ["phone", "移动端", 33], ["grid", "矩阵", 30], ["burst", "辅助", 30], ["redo", "重做", 30],
  ["undo", "撤销", 30], ["file", "导出", 30], ["eye", "预览", 32], ["sliders", "样式", 30],
];

const SIDE: [string, string][] = [["plusCircle", "视图"], ["gearBold", "组件"], ["brush", "其他"], ["copy", "复用"]];

export default function App() {
  return (
    <Page>
      <GlobalStyle />
      <Window>
        <Header>
          <PageTitle>名称<Colon>：</Colon> 2021年全国GDP数据</PageTitle>
          <Actions>
            {TOOLBAR.map(([name, label, size]) => (
              <Round key={name} type="button" aria-label={label}><Icon name={name} size={size} /></Round>
            ))}
            <PlainButton type="button">保存</PlainButton>
            <PlainButton type="button">关闭</PlainButton>
          </Actions>
        </Header>
        <Main>
          <Sidebar>
            {SIDE.map(([name, label]) => (
              <SideItem key={name}>
                <SideRound type="button" aria-label={label}><Icon name={name} size={29} /></SideRound>
                <SideLabel>{label}</SideLabel>
              </SideItem>
            ))}
          </Sidebar>

          <Stage>
            <Canvas>
              <ChinaMap />
              <ChartTitle>今年上半年GDP（亿元）-copy(2)</ChartTitle>
              <ChartTools>
                <Tool type="button" aria-label="放大"><Icon name="expand" size={34} weight={3} /></Tool>
                <Tool type="button" aria-label="矩阵"><Icon name="grid" size={42} weight={2.6} /></Tool>
                <Tool type="button" aria-label="编辑"><Icon name="edit" size={46} weight={3} /></Tool>
                <Tool type="button" aria-label="设置"><Icon name="cog" size={42} weight={2.8} /></Tool>
              </ChartTools>
              <ZoomCard>
                <Round type="button" aria-label="放大地图"><Icon name="plus" size={30} /></Round>
                <Round type="button" aria-label="还原"><Icon name="sync" size={27} weight={2.8} /></Round>
                <Round type="button" aria-label="缩小地图"><Icon name="minus" size={30} /></Round>
              </ZoomCard>
              <Legend>
                <LegendWord>High</LegendWord>
                <LegendValues><span>57226</span><span>926</span></LegendValues>
                <LegendScale>
                  <Handle $color="#ea7ccc" />
                  <Ramp />
                  <Handle $color="#5470c6" />
                </LegendScale>
                <LegendWord>Low</LegendWord>
              </Legend>
            </Canvas>
          </Stage>

          <Panel>
            <PanelHead>
              <Round type="button" aria-label="收起"><Icon name="forward" size={28} /></Round>
              <InfoDot>!</InfoDot>
              <PanelTitle>今年上半年GDP（亿…</PanelTitle>
              <ResetButton type="button">重置</ResetButton>
            </PanelHead>
            <Tabs role="tablist">
              <Tab type="button" role="tab" aria-selected="true" $active><span>数据</span></Tab>
              <Tab type="button" role="tab" aria-selected="false"><span>样式</span></Tab>
              <Tab type="button" role="tab" aria-selected="false"><span>高级</span></Tab>
            </Tabs>
            <Columns>
              <Fields>
                <SearchRow>
                  <SearchBox>
                    <Icon name="search" size={30} />
                    <input type="text" placeholder="搜索" aria-label="搜索" />
                  </SearchBox>
                  <LinkIcon type="button" aria-label="编辑字段"><Icon name="cog" size={31} weight={2.6} /></LinkIcon>
                  <LinkIcon type="button" aria-label="刷新"><Icon name="sync" size={28} weight={2.6} /></LinkIcon>
                </SearchRow>
                <FieldGroup>
                  <Heading>维度</Heading>
                  <FieldList>
                    <FieldRow><Icon name="typeT" size={28} weight={3} />province</FieldRow>
                    <FieldRow><Icon name="typeT" size={28} weight={3} />city</FieldRow>
                  </FieldList>
                </FieldGroup>
                <FieldGroup>
                  <Heading>指标</Heading>
                  <FieldList>
                    <FieldRow $metric><Icon name="hash" size={29} weight={3} />gdp</FieldRow>
                    <FieldRow $metric><Icon name="hash" size={29} weight={3} />记录数*</FieldRow>
                  </FieldList>
                </FieldGroup>
              </Fields>

              <Settings>
                <ChartTypeBlock $top={6}>
                  <Heading>图表类型</Heading>
                  <ChartTypeRow>
                    <MiniMap />
                    <SelectBox>
                      <select aria-label="更改类型"><option>更改类型</option></select>
                      <Caret size={20} />
                    </SelectBox>
                  </ChartTypeRow>
                </ChartTypeBlock>
                <Block $top={12}>
                  <Heading>结果展示</Heading>
                  <LimitRow>
                    <Radio type="radio" name="limit" id="limit-all" />
                    <label htmlFor="limit-all">全部</label>
                    <Radio type="radio" name="limit" aria-label="指定条数" defaultChecked />
                    <LimitInput type="text" defaultValue="1000" aria-label="条数" />
                  </LimitRow>
                </Block>
                <Block $top={24}>
                  <Heading>地图范围</Heading>
                  <SelectBox $scope>
                    <select aria-label="地图范围"><option>中华人民共和国</option></select>
                    <ClearButton type="button" aria-label="清除"><Icon name="cross" size={26} weight={5} /></ClearButton>
                    <Caret size={26} />
                  </SelectBox>
                </Block>
                <Block $top={11}>
                  <Heading>地区 / 维度</Heading>
                  <DropZone><DimChip>province</DimChip></DropZone>
                </Block>
                <Block $top={27}>
                  <Heading>数据 / 指标</Heading>
                  <DropZone>
                    <Chip type="button" $metric>
                      <Icon name="hash" size={29} weight={3} />
                      gdp
                      <Aggregate>求和</Aggregate>
                      <Icon name="down" size={27} weight={2.4} />
                    </Chip>
                  </DropZone>
                </Block>
                <Block $top={27}>
                  <Heading>过滤器</Heading>
                  <DropZone><Placeholder>拖动字段至此处</Placeholder></DropZone>
                </Block>
                <Block $top={26}>
                  <Heading>钻取 / 维度</Heading>
                  <DropZone>
                    <DimChip>province</DimChip>
                    <DimChip>city</DimChip>
                  </DropZone>
                </Block>
              </Settings>
            </Columns>
            <Arrows viewBox="3073 137 810 1734" aria-hidden="true">
              <g fill="#ff0000" stroke="#fff" strokeWidth="5" strokeLinejoin="round" paintOrder="stroke">
                <path d="M3374 573L3493 859L3514 842L3508 937L3445 868L3469 868Z" />
                <path d="M3322 1248L3420 1158L3397 1146L3489 1124L3441 1205L3434 1182Z" />
              </g>
            </Arrows>
          </Panel>
        </Main>
      </Window>
    </Page>
  );
}
